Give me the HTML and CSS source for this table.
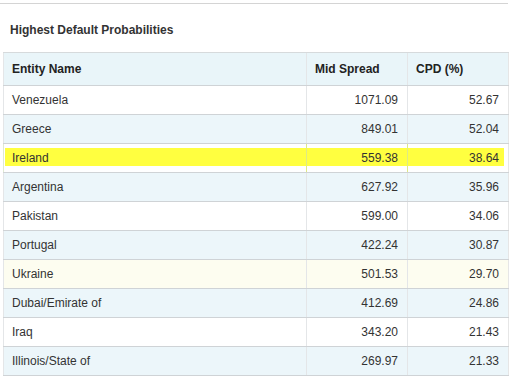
FILE: index.html
```html
<!DOCTYPE html>
<html lang="en">
  <head>
    <meta charset="utf-8" />
    <title>Highest Default Probabilities</title>
    <link rel="stylesheet" href="styles.css">
  </head>
  <body>
    <div class="panel">
      <h2 class="panel__title">Highest Default Probabilities</h2>
      <table class="cpd-table">
        <colgroup>
          <col class="col-name" />
          <col class="col-num" />
          <col class="col-num" />
        </colgroup>
        <thead>
          <tr>
            <th>Entity Name</th>
            <th>Mid Spread</th>
            <th>CPD (%)</th>
          </tr>
        </thead>
        <tbody>
          <tr><td>Venezuela</td><td class="num">1071.09</td><td class="num">52.67</td></tr>
          <tr class="alt"><td>Greece</td><td class="num">849.01</td><td class="num">52.04</td></tr>
          <tr class="highlight"><td>Ireland</td><td class="num">559.38</td><td class="num">38.64</td></tr>
          <tr class="alt"><td>Argentina</td><td class="num">627.92</td><td class="num">35.96</td></tr>
          <tr><td>Pakistan</td><td class="num">599.00</td><td class="num">34.06</td></tr>
          <tr class="alt"><td>Portugal</td><td class="num">422.24</td><td class="num">30.87</td></tr>
          <tr class="hover"><td>Ukraine</td><td class="num">501.53</td><td class="num">29.70</td></tr>
          <tr class="alt"><td>Dubai/Emirate of</td><td class="num">412.69</td><td class="num">24.86</td></tr>
          <tr><td>Iraq</td><td class="num">343.20</td><td class="num">21.43</td></tr>
          <tr class="alt"><td>Illinois/State of</td><td class="num">269.97</td><td class="num">21.33</td></tr>
        </tbody>
      </table>
    </div>
  </body>
</html>
```

FILE: styles.css
```css
body {
  margin: 0;
  background: #fff;
  font-family: "Liberation Sans", Arial, sans-serif;
  font-size: 12px;
  color: #333;
}
.panel {
  width: 508px;
  margin-top: 3px;
  border-top: 1px solid #d4d4d4;
}
.panel__title {
  margin: 0;
  padding: 19px 10px 15px;
  font-size: 12px;
  line-height: 14px;
  font-weight: bold;
  color: #333;
}
.cpd-table {
  margin-left: 3px;
  width: 505px;
  border-collapse: collapse;
  table-layout: fixed;
  border-left: 1px solid #e6e6e6;
  border-right: 1px solid #e6e6e6;
}
.col-name {
  width: 303px;
}
.col-num {
  width: 101px;
}
.cpd-table th,
.cpd-table td {
  padding: 0 8px;
  text-align: left;
  border-top: 1px solid #cfd3d6;
  border-bottom: 1px solid #cfd3d6;
  border-left: 1px solid #e4e6e8;
  white-space: nowrap;
}
.cpd-table th {
  height: 32px;
  font-weight: bold;
  color: #222;
  background: #e9f5f9;
  border-top-color: #d6dadc;
}
.cpd-table td {
  height: 28px;
}
.cpd-table td.num {
  text-align: right;
  padding-right: 9px;
}
.cpd-table tr.alt td {
  background: #ecf6fa;
}
.cpd-table tr.hover td {
  background: #fdfdf0;
}
.cpd-table tr.highlight td {
  background: #ffff40;
  box-shadow: inset 0 4px 0 #fff, inset 0 -6px 0 #fff;
  border-left-color: rgba(200, 220, 180, 0.6);
}
.cpd-table tr.highlight td:first-child {
  box-shadow: inset 0 4px 0 #fff, inset 0 -6px 0 #fff, inset 1px 0 0 #fff;
}
.cpd-table tr.highlight td:last-child {
  box-shadow: inset 0 4px 0 #fff, inset 0 -6px 0 #fff, inset -4px 0 0 #fff;
}
```
